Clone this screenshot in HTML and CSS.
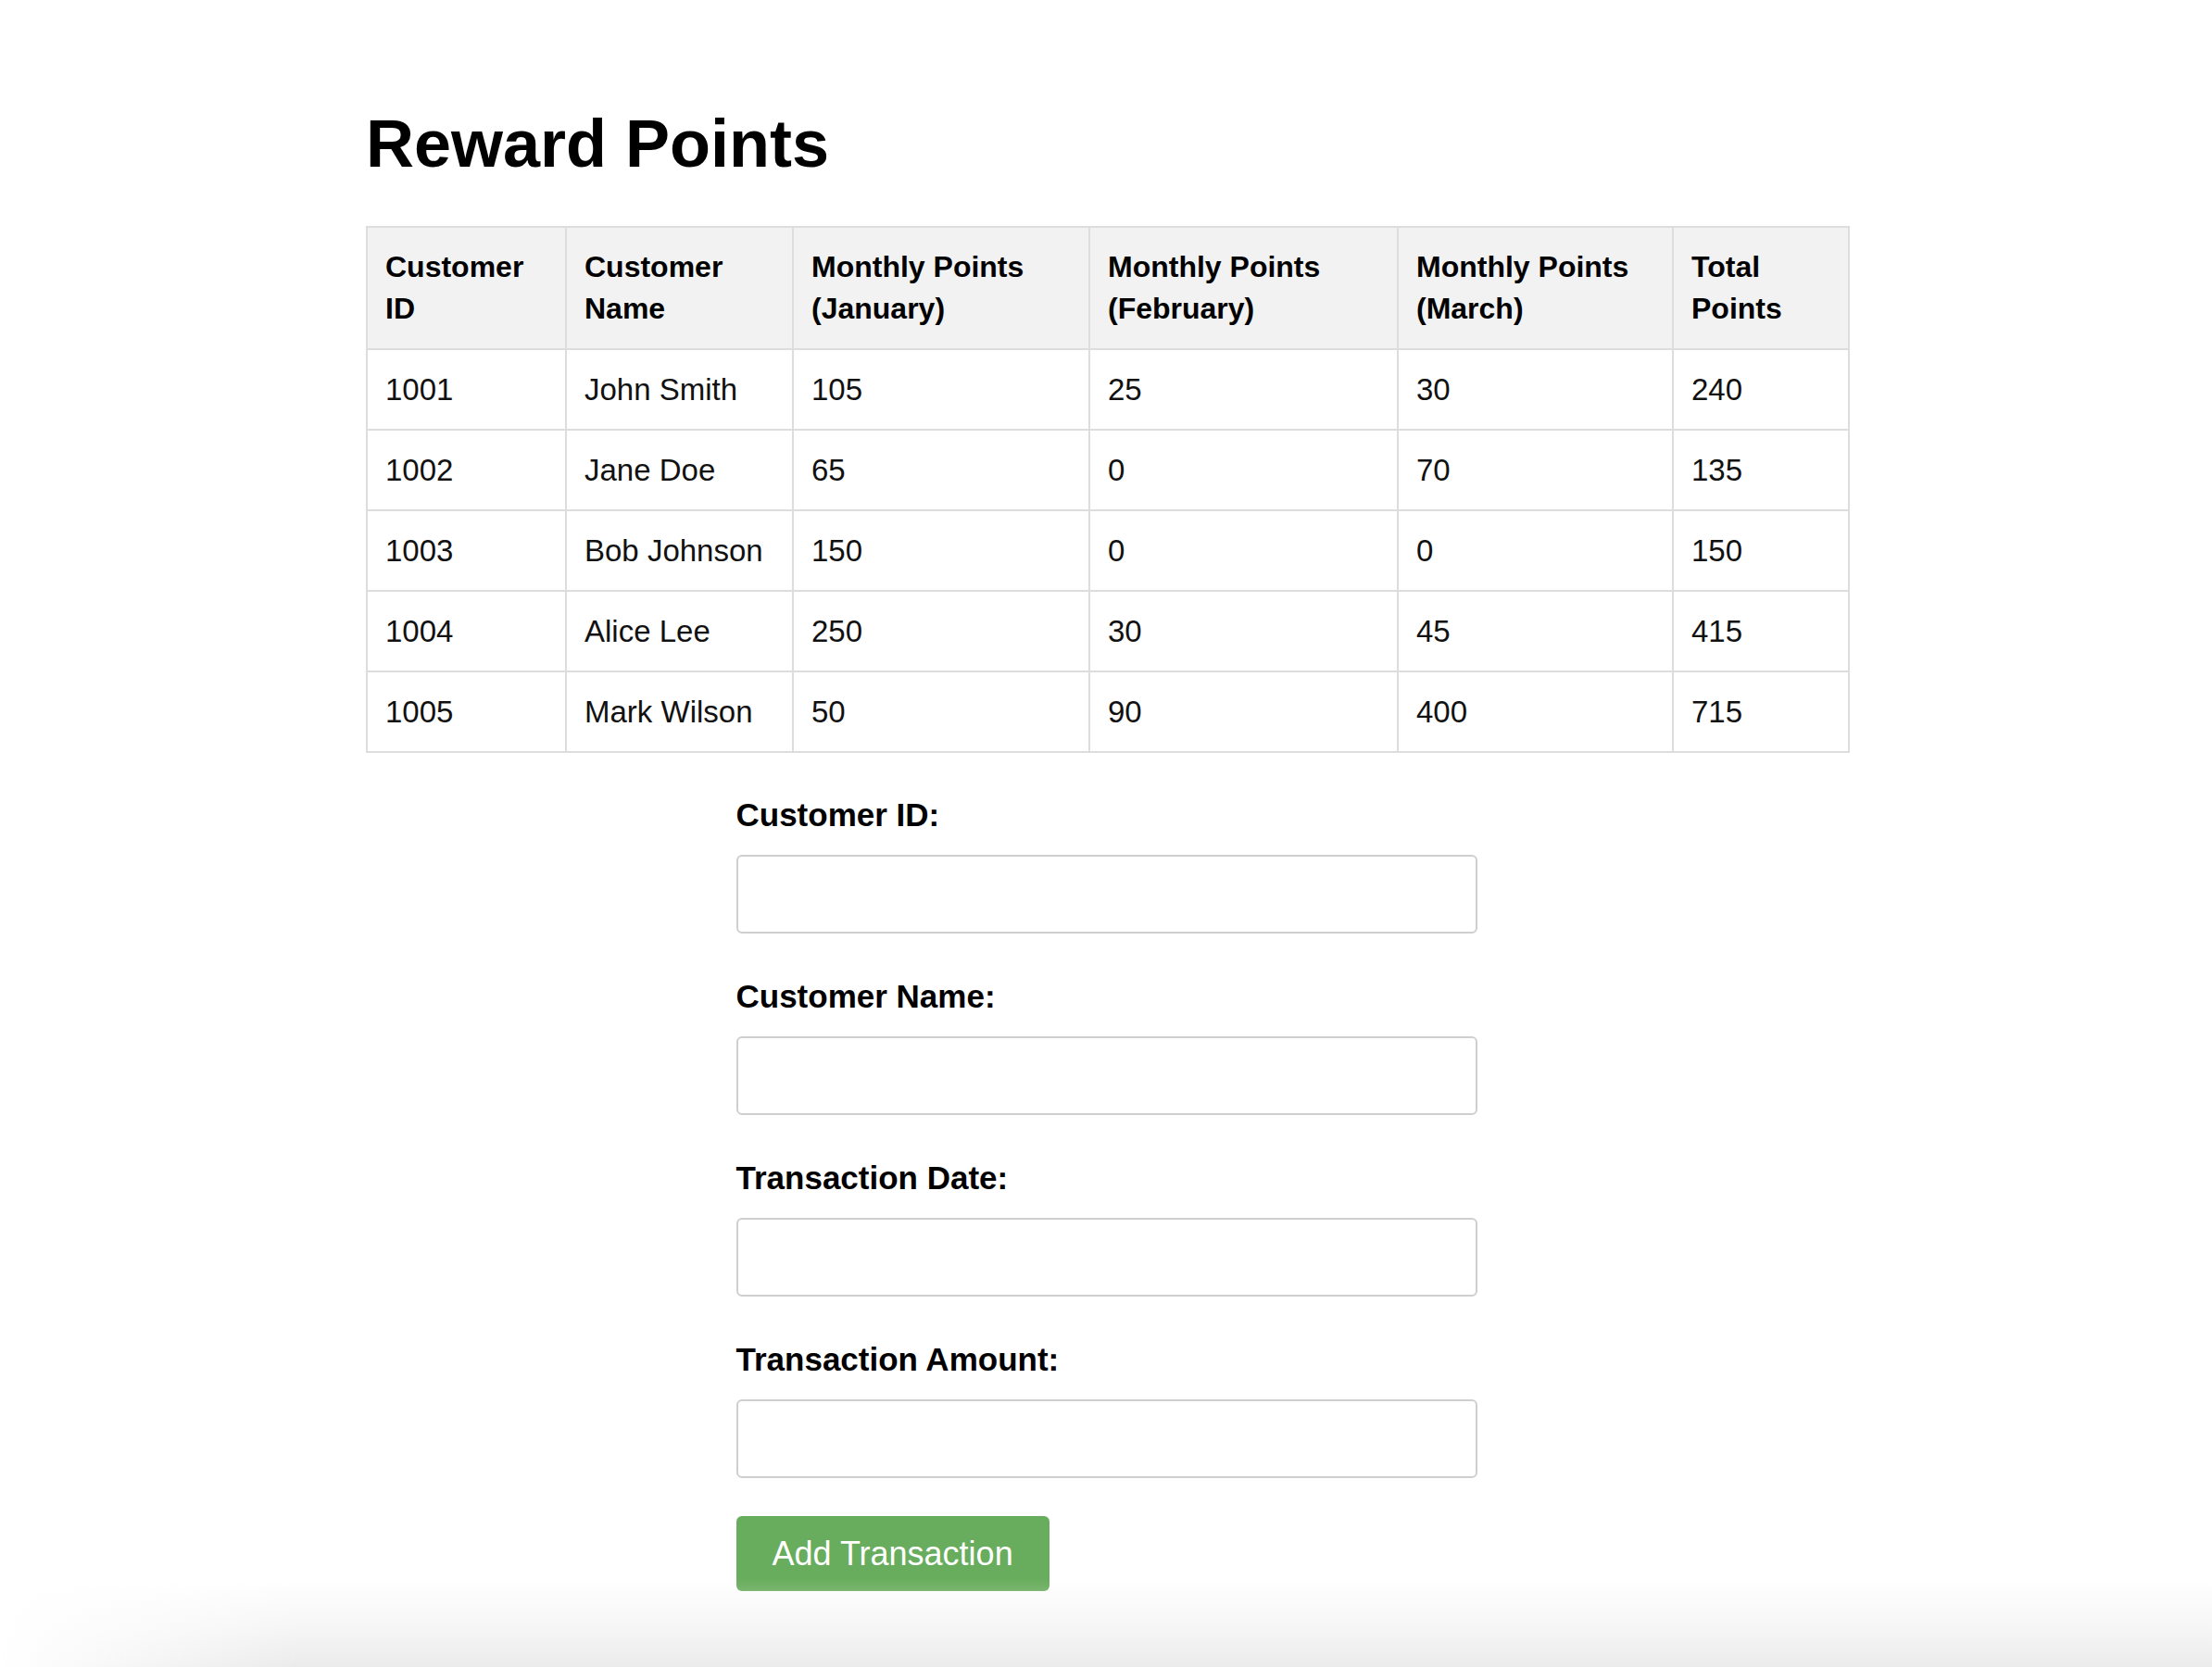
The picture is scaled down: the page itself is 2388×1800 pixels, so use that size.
FILE: index.html
```html
<!DOCTYPE html>
<html lang="en">
<head>
<meta charset="utf-8">
<title>Reward Points</title>
<link rel="stylesheet" href="styles.css">
</head>
<body>
<main class="page">
  <h1 class="title">Reward Points</h1>
  <table class="points">
    <colgroup>
      <col class="c-id"><col class="c-name"><col class="c-jan"><col class="c-feb"><col class="c-mar"><col class="c-total">
    </colgroup>
    <thead>
      <tr>
        <th>Customer ID</th>
        <th>Customer Name</th>
        <th>Monthly Points (January)</th>
        <th>Monthly Points (February)</th>
        <th>Monthly Points (March)</th>
        <th>Total Points</th>
      </tr>
    </thead>
    <tbody>
      <tr><td>1001</td><td>John Smith</td><td>105</td><td>25</td><td>30</td><td>240</td></tr>
      <tr><td>1002</td><td>Jane Doe</td><td>65</td><td>0</td><td>70</td><td>135</td></tr>
      <tr><td>1003</td><td>Bob Johnson</td><td>150</td><td>0</td><td>0</td><td>150</td></tr>
      <tr><td>1004</td><td>Alice Lee</td><td>250</td><td>30</td><td>45</td><td>415</td></tr>
      <tr><td>1005</td><td>Mark Wilson</td><td>50</td><td>90</td><td>400</td><td>715</td></tr>
    </tbody>
  </table>

  <form class="tx-form">
    <div class="field">
      <label for="cid">Customer ID:</label>
      <input id="cid" type="text">
    </div>
    <div class="field">
      <label for="cname">Customer Name:</label>
      <input id="cname" type="text">
    </div>
    <div class="field">
      <label for="tdate">Transaction Date:</label>
      <input id="tdate" type="text">
    </div>
    <div class="field">
      <label for="tamount">Transaction Amount:</label>
      <input id="tamount" type="text">
    </div>
    <button type="button" class="add-btn">Add Transaction</button>
  </form>
</main>
<div class="bottom-shade"></div>
</body>
</html>
```

FILE: styles.css
```css
* { box-sizing: border-box; }

html, body {
  margin: 0;
  padding: 0;
  background: #ffffff;
}

body {
  font-family: "Liberation Sans", Arial, sans-serif;
  color: #111;
  min-height: 1800px;
}

.page {
  width: 1600px;
  margin: 0 auto;
  padding-top: 115px;
  padding-left: 1px;
}

.title {
  margin: 0 0 49px 0;
  font-size: 72px;
  line-height: 80px;
  font-weight: bold;
  color: #000;
}

.points {
  width: 1600px;
  border-collapse: collapse;
  table-layout: fixed;
  font-size: 33px;
  line-height: 45px;
}

.c-id { width: 215px; }
.c-name { width: 245px; }
.c-jan { width: 320px; }
.c-feb { width: 333px; }
.c-mar { width: 297px; }
.c-total { width: 190px; }

.points th,
.points td {
  border: 2px solid #dddddd;
  padding: 20px 19px;
  text-align: left;
  vertical-align: middle;
}

.points th {
  background: #f2f2f2;
  font-weight: bold;
  font-size: 32px;
  color: #000;
}

.tx-form {
  width: 800px;
  margin: 44px auto 0 auto;
  display: flex;
  flex-direction: column;
  gap: 45px;
}

.field {
  display: flex;
  flex-direction: column;
  gap: 21px;
}

.field label {
  font-size: 35px;
  line-height: 45px;
  font-weight: bold;
  color: #000;
}

.field input {
  width: 800px;
  height: 85px;
  border: 2px solid #cfcfcf;
  border-radius: 6px;
  background: #fff;
  font-size: 33px;
  padding: 0 16px;
}

.add-btn {
  align-self: flex-start;
  margin-top: -4px;
  height: 81px;
  padding: 0 39px;
  border: none;
  border-radius: 6px;
  background: #68ad5d;
  color: #ffffff;
  font-family: "Liberation Sans", Arial, sans-serif;
  font-size: 36px;
  line-height: 41px;
}

.bottom-shade {
  position: fixed;
  left: 0;
  right: 0;
  bottom: 0;
  height: 95px;
  pointer-events: none;
  background: linear-gradient(to bottom, rgba(238,238,238,0) 0%, rgba(238,238,238,0.6) 60%, #ebebeb 100%);
  -webkit-mask-image: linear-gradient(to right, transparent 0, #000 320px);
  mask-image: linear-gradient(to right, transparent 0, #000 320px);
}
```
